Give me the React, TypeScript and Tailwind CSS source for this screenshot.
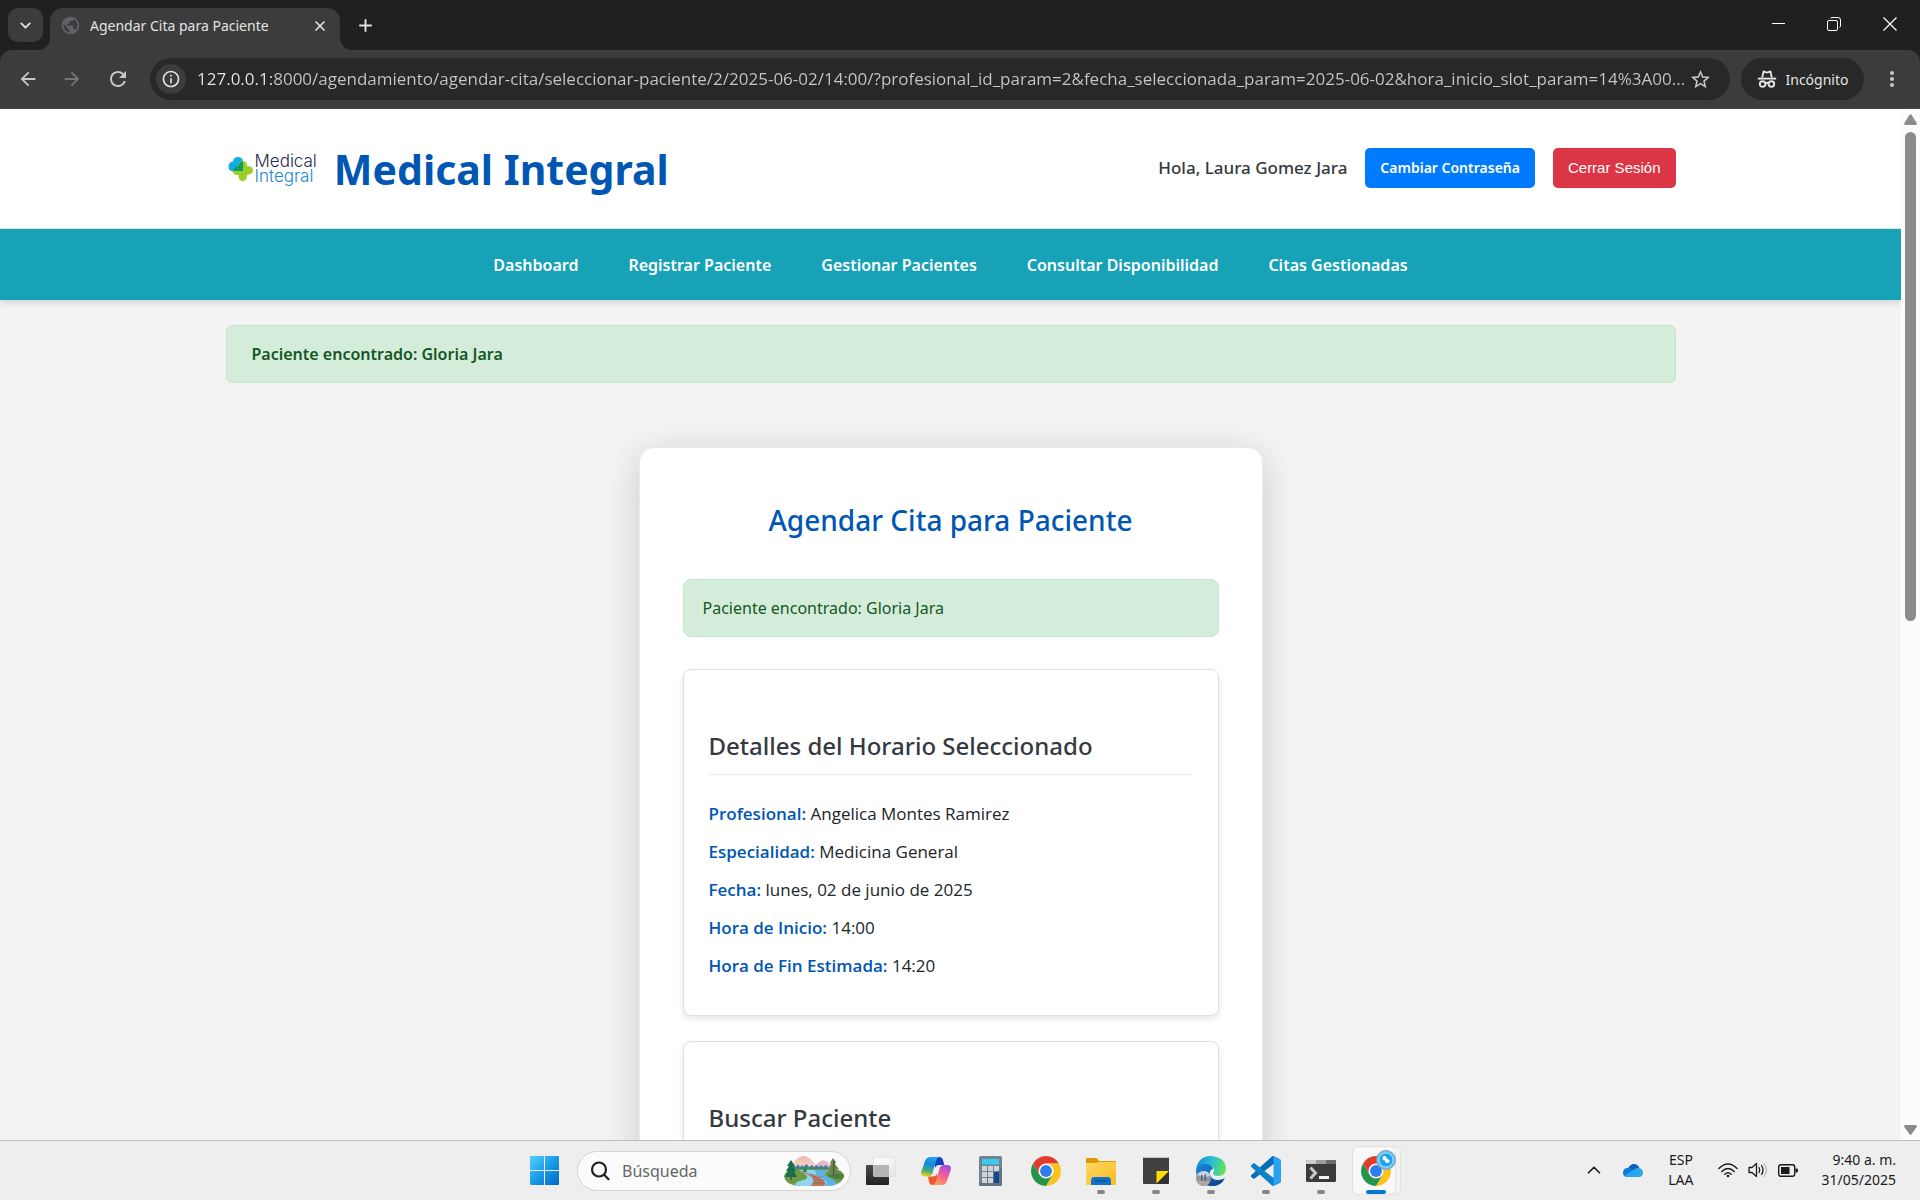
import React from "react";
import { ChevronDown, ChevronUp, Plus, X } from "lucide-react";
import { MdArrowBack, MdArrowForward, MdInfoOutline, MdMoreVert, MdPublic, MdRefresh, MdStarBorder } from "react-icons/md";

const URL_TEXT =
  "127.0.0.1:8000/agendamiento/agendar-cita/seleccionar-paciente/2/2025-06-02/14:00/?profesional_id_param=2&fecha_seleccionada_param=2025-06-02&hora_inicio_slot_param=14%3A00...";

const NAV = ["Dashboard", "Registrar Paciente", "Gestionar Pacientes", "Consultar Disponibilidad", "Citas Gestionadas"];

const DETAILS = [
  ["Profesional:", "Angelica Montes Ramirez"],
  ["Especialidad:", "Medicina General"],
  ["Fecha:", "lunes, 02 de junio de 2025"],
  ["Hora de Inicio:", "14:00"],
  ["Hora de Fin Estimada:", "14:20"],
];

/* ---------- Browser chrome ---------- */

function IncognitoIcon() {
  return (
    <svg viewBox="0 0 20 20" className="size-5" fill="none" stroke="#e3e3e3" strokeWidth="1.9">
      <path d="M5.2 8.6 6.6 2.4l2 .8c.9.3 1.9.3 2.8 0l2-.8 1.4 6.2" strokeLinejoin="round" />
      <path d="M.8 9.6h18.4" />
      <circle cx="5.6" cy="15" r="2.8" />
      <circle cx="14.4" cy="15" r="2.8" />
      <path d="M8.4 14.4c1-.7 2.200-.7 3.200 0" />
    </svg>
  );
}

function TabStrip() {
  return (
    <div className="flex h-[50px] items-center bg-[#1f2120] text-[#e3e3e3]">
      <button aria-label="Buscar pestañas" className="ml-2 flex h-[34px] w-[35px] items-center justify-center rounded-[10px] bg-[#3c3c3c]">
        <ChevronDown size={17} strokeWidth={2.6} />
      </button>
      <div className="relative ml-[7px] flex h-[42px] w-[290px] items-center self-end rounded-t-[13px] bg-[#3c3c3c] px-[10px] pb-[7px]">
        <svg viewBox="0 0 12 12" className="absolute bottom-0 -left-3 size-3" fill="#3c3c3c"><path d="M12 0v12H0A12 12 0 0 0 12 0z" /></svg>
        <svg viewBox="0 0 12 12" className="absolute -right-3 bottom-0 size-3" fill="#3c3c3c"><path d="M0 0v12h12A12 12 0 0 1 0 0z" /></svg>
        <MdPublic size={21} color="#5f6368" />
        <span className="ml-[9px] flex-1 truncate text-[14px] leading-5 text-[#e3e3e3]">Agendar Cita para Paciente</span>
        <button aria-label="Cerrar pestaña" className="flex size-5 items-center justify-center">
          <X size={16} strokeWidth={2.5} />
        </button>
      </div>
      <button aria-label="Nueva pestaña" className="ml-[15px] flex size-5 items-center justify-center">
        <Plus size={19} strokeWidth={2.4} />
      </button>
      <div className="ml-auto flex pr-[2px] pb-[2px]">
        <button aria-label="Minimizar" className="flex h-9 w-14 items-center justify-center">
          <svg width="13" height="13" viewBox="0 0 13 13" stroke="#fff"><path d="M0 5.500h13" /></svg>
        </button>
        <button aria-label="Restaurar" className="flex h-9 w-14 items-center justify-center">
          <svg width="14" height="14" viewBox="0 0 14 14" stroke="#fff" fill="none">
            <rect x=".5" y="3.500" width="10" height="10" rx="1.500" />
            <path d="M3.500 1.500Q4 .5 5 .5h6q2.500 0 2.500 2.500v6q0 1-1 1.500" />
          </svg>
        </button>
        <button aria-label="Cerrar" className="flex h-9 w-14 items-center justify-center">
          <svg width="14" height="14" viewBox="0 0 14 14" stroke="#fff" strokeWidth="1.200"><path d="M.5.5l13 13M13.500.5l-13 13" /></svg>
        </button>
      </div>
    </div>
  );
}

function Toolbar() {
  return (
    <div className="bg-[#1f2120]">
      <div className="flex h-[59px] items-center rounded-t-[12px] border-b border-[#4a4849] bg-[#3c3c3c] pr-[16px] pl-[17px] text-[#e3e3e3]">
        <button aria-label="Atrás"><MdArrowBack size={22} color="#c7c7c7" /></button>
        <button aria-label="Adelante" className="ml-[22px]"><MdArrowForward size={22} color="#757575" /></button>
        <button aria-label="Recargar" className="ml-[23px]"><MdRefresh size={24} color="#c7c7c7" /></button>
        <div className="ml-[20px] flex h-[42px] flex-1 items-center rounded-full bg-[#282828] pr-[18px] pl-[6px]">
          <button aria-label="Información del sitio" className="flex size-[30px] shrink-0 items-center justify-center rounded-full bg-[#3c3c3c]">
            <MdInfoOutline size={20} />
          </button>
          <input
            aria-label="Dirección"
            readOnly
            value={URL_TEXT}
            className="ml-[11px] min-w-0 flex-1 bg-[linear-gradient(to_right,#e8e8e8_77px,#c7c7c7_77px)] bg-clip-text font-['Open_Sans',sans-serif] text-[17px] leading-6 text-transparent outline-none"
          />
          <button aria-label="Añadir a marcadores" className="shrink-0"><MdStarBorder size={23} color="#c7c7c7" /></button>
        </div>
        <button className="ml-[11px] flex h-[42px] w-[123px] items-center justify-center gap-[9px] rounded-full bg-[#282828] text-[14px]">
          <IncognitoIcon />
          Incógnito
        </button>
        <button aria-label="Menú" className="ml-[16px]"><MdMoreVert size={24} color="#c7c7c7" /></button>
      </div>
    </div>
  );
}

/* ---------- Page ---------- */

function Logo() {
  return (
    <div className="flex items-center gap-px">
      <svg width="26" height="26" viewBox="0 0 26 26">
        <path d="M5 5.500Q5.500 1 10 1t5 4.500q0 9 0 10H5q-4.500-.5-4.500-5T5 5.500z" fill="#12aee0" />
        <path d="M10.500 10q0-5 4.200-5t4.300 5q5.500 0 6 4t-6 5q0 6-4.300 6t-4.200-6q-6 0-6-4.500h6z" fill="#9bcf26" />
        <path d="M10.500 15h-5.500q.5-4 5.500-5 .5-4.500 4.500-4.500V15z" fill="#169a63" />
      </svg>
      <span className="flex flex-col font-['Inter',sans-serif] text-[17px] leading-[15px] font-light">
        <span className="text-[#1f2b4d]">Medical</span>
        <span className="text-[#1e88d2]">Integral</span>
      </span>
    </div>
  );
}

function SiteHeader() {
  return (
    <header className="border-b border-[#e5e7ea] bg-white">
      <div className="mx-auto flex h-[119px] w-full max-w-[1450px] items-center pb-px">
        <div className="flex items-center gap-[17px] pt-[2px] pl-[2px]">
          <Logo />
          <h1 className="text-[41px] leading-[50px] font-bold text-[#0056b3]">Medical Integral</h1>
        </div>
        <div className="ml-auto flex items-center gap-[18px]">
          <span className="text-[17px] leading-6 font-medium text-[#343a40]">Hola, Laura Gomez Jara</span>
          <a href="#cambiar" className="flex h-10 items-center rounded-[5px] bg-[#007bff] px-[15px] pb-[2px] text-[14px] font-semibold text-white">
            Cambiar Contraseña
          </a>
          <button className="h-10 rounded-[5px] bg-[#dc3545] px-[15px] font-['Liberation_Sans',sans-serif] text-[15px] text-white">Cerrar Sesión</button>
        </div>
      </div>
    </header>
  );
}

function Card({ title, children }: { title: string; children?: React.ReactNode }) {
  return (
    <section className="rounded-[8px] border border-[#dee0e6] bg-white px-[25px] pt-[60px] pb-[30px] shadow-[0_3px_6px_rgba(0,0,0,0.1)]">
      <h3 className="border-b border-[#e9ecef] pb-3 text-[24px] leading-8 font-medium text-[#343a40]">{title}</h3>
      {children}
    </section>
  );
}

function Page() {
  return (
    <div className="min-w-0 flex-1 overflow-hidden bg-[#f3f3f3]">
      <SiteHeader />
      <nav className="flex h-[71px] items-center justify-center gap-[50px] bg-[#17a2b8] shadow-[0_3px_6px_rgba(0,0,0,0.12)]">
        {NAV.map((item) => (
          <a key={item} href="#nav" className="text-base font-semibold text-white">{item}</a>
        ))}
      </nav>
      <main className="mx-auto w-full max-w-[1450px] pt-[25px]">
        <div role="status" className="rounded-[6px] border border-[#c3e6cb] bg-[#d4edda] px-[25px] py-4 text-base leading-6 font-semibold text-[#155724]">
          Paciente encontrado: Gloria Jara
        </div>
        <div className="mx-auto mt-16 max-w-[624px] rounded-[15px] border border-[#e9ecef] bg-white px-[43px] pt-[54px] pb-11 shadow-[0_8px_35px_rgba(0,0,0,0.17)]">
          <h2 className="text-center text-[28px] leading-9 font-medium text-[#0056b3]">Agendar Cita para Paciente</h2>
          <div role="status" className="mt-[41px] rounded-[8px] border border-[#c3e6cb] bg-[#d4edda] px-[19px] py-4 text-base leading-6 text-[#155724]">
            Paciente encontrado: Gloria Jara
          </div>
          <div className="mt-8 flex flex-col gap-[25px]">
            <Card title="Detalles del Horario Seleccionado">
              <div className="mt-5 font-['Open_Sans',sans-serif] text-[17px] leading-[38px] text-[#212529]">
                {DETAILS.map(([label, value]) => (
                  <p key={label}>
                    <strong className="font-[650] text-[#0056b3]">{label}</strong> {value}
                  </p>
                ))}
              </div>
            </Card>
            <Card title="Buscar Paciente" />
          </div>
        </div>
      </main>
    </div>
  );
}

function Scrollbar() {
  return (
    <div className="flex w-[19px] shrink-0 flex-col items-center bg-[#fcfcfc] py-[5px]">
      <svg width="13" height="11" viewBox="0 0 13 11" fill="#8b8b8b"><path d="M5.500.8q1-1 2 0l5.200 8.200q.5 2-1 2H1.300q-1.500 0-1-2z" /></svg>
      <div className="mt-[7px] h-[489px] w-[11px] rounded-full bg-[#8b8b8b]" />
      <svg width="13" height="10" viewBox="0 0 13 10" fill="#8b8b8b" className="mt-auto"><path d="M5.500 9.200q1 1 2 0l5.200-7.200q.5-2-1-2H1.300q-1.500 0-1 2z" /></svg>
    </div>
  );
}

/* ---------- Taskbar ---------- */

function ChromeLogo() {
  return (
    <svg viewBox="0 0 48 48" className="size-[30px]">
      <circle cx="24" cy="24" r="12" fill="#fff" />
      <path d="M24 12h20.780a24 24 0 0 0-41.560 0L13.610 30A12 12 0 0 1 24 12z" fill="#e33b2e" />
      <path d="M34.390 30 24 48a24 24 0 0 0 20.780-36H24a12 12 0 0 1 10.390 18z" fill="#fcc31e" />
      <path d="M13.610 30 3.220 12A24 24 0 0 0 24 48l10.390-18a12 12 0 0 1-20.780 0z" fill="#23944a" />
      <circle cx="24" cy="24" r="9.500" fill="#2f7cee" />
    </svg>
  );
}

function WindowsLogo() {
  return (
    <svg viewBox="0 0 29 29" className="size-[29px]">
      <defs>
        <linearGradient id="win" x1="0" y1="0" x2="29" y2="29" gradientUnits="userSpaceOnUse">
          <stop stopColor="#56d2fd" /><stop offset=".5" stopColor="#1a9be8" /><stop offset="1" stopColor="#0069c8" />
        </linearGradient>
      </defs>
      <path d="M1 0h13v14H0V1q0-1 1-1zM15 0h13q1 0 1 1v13H15zM0 15h14v14H1q-1 0-1-1zM15 15h14v13q0 1-1 1H15z" fill="url(#win)" />
    </svg>
  );
}

function Landscape() {
  return (
    <svg viewBox="0 0 61 32" className="h-8 w-[61px]">
      <defs>
        <linearGradient id="mtn" x1="0" y1="0" x2="0" y2="1"><stop stopColor="#eeb4a8" /><stop offset="1" stopColor="#fbe3dc" /></linearGradient>
        <clipPath id="isle"><path d="M1 21Q4 13 15 13L46 13Q60 14 61 21 59 31 42 31H20Q2 31 1 21z" /></clipPath>
      </defs>
      <path d="M6 15Q14 1 20 1t13 9Q38 4 43 6t8 10z" fill="url(#mtn)" />
      <path d="M33 10Q38 4 43 6l6 8H36z" fill="#e3b7d3" />
      <path d="M9 16v-4l2-2 2 2 2-3 2 3 2-2 2 2 3-3 2 3 3-2 2 2 2-2 3 2 2-2 2 2 3-2 2 2v5z" fill="#417f95" />
      <g clipPath="url(#isle)">
        <path d="M0 14h61v18H0z" fill="#6d9a45" />
        <path d="M14 15h32l-4 3q-3 2 4 5t6 9H12q-2-5 8-7t-4-10z" fill="#8fd4f0" />
        <path d="M32 15h13q-8 4 2 8t6 9H42q4-6-3-9t-7-8z" fill="#5cb3e2" />
        <path d="M14 15q14 5 16 9t-4 8h15q4-6-6-10T14 15z" fill="#b77964" />
        <path d="M27 19l8 2M30 22h10M30 25h12M29 28h13" stroke="#8d5547" strokeWidth=".6" />
        <path d="M44 20q8-3 17-1v4q-10 3-17-3z" fill="#4d8040" />
      </g>
      <path d="M8 5 4 11h2l-3 5h2l-3 6h12l-3-6h2l-3-5h2z" fill="#176e4e" />
      <path d="M7.500 22h1.400v3H7.500z" fill="#6d432c" />
      <path d="M22 9l-2 8h4z" fill="#27865a" />
      <path d="M50 3l-3 5 1 1-4 6h3l-2 3h11l-2-4h2l-4-5 1-2z" fill="#69894f" />
      <path d="M50 6h1.200v15H50z" fill="#5c5137" />
    </svg>
  );
}

function TaskViewIcon() {
  return (
    <svg viewBox="0 0 30 28" className="h-7 w-[30px]">
      <defs>
        <linearGradient id="tvd" x1="0" y1="0" x2="0" y2="1"><stop stopColor="#4a4a48" /><stop offset="1" stopColor="#222" /></linearGradient>
        <linearGradient id="tvl" x1="0" y1="0" x2="1" y2="1"><stop stopColor="#fff" /><stop offset="1" stopColor="#e4e4e4" /></linearGradient>
      </defs>
      <rect y="8" width="23" height="20" rx="1" fill="url(#tvd)" />
      <rect x="7.500" y=".5" width="22" height="19" rx="1" fill="url(#tvl)" stroke="#dcdcdc" strokeWidth=".6" />
      <path d="M7.500 8H22q1 0 1 1v10.500H8.500q-1 0-1-1z" fill="#b5b5b3" />
    </svg>
  );
}

function CopilotIcon() {
  return (
    <svg viewBox="0 0 30 28" className="h-7 w-[30px]">
      <defs>
        <linearGradient id="cp1" x1="8" y1="0" x2="4" y2="19" gradientUnits="userSpaceOnUse">
          <stop stopColor="#1ea5ee" /><stop offset=".35" stopColor="#1686dd" /><stop offset=".7" stopColor="#3fae7c" /><stop offset="1" stopColor="#f2cd0f" />
        </linearGradient>
        <linearGradient id="cp2" x1="25" y1="8" x2="16" y2="28" gradientUnits="userSpaceOnUse">
          <stop stopColor="#a64be6" /><stop offset=".5" stopColor="#f2608f" /><stop offset="1" stopColor="#ffa154" />
        </linearGradient>
      </defs>
      <path d="M14 0h4.500q2.500 0 3.300 2.500L23.300 8H18q-3 0-4 3z" fill="#173fc4" />
      <path d="M16 28h-4.500q-2.500 0-3.300-2.500L7 19.500h5q3 0 4-3z" fill="#f0582e" />
      <path d="M9.500 0H18q-2 .8-2.800 3.500L11.500 16q-1.100 3.500-4.500 3.500H4q-5 0-3.700-5L4.200 3.500Q5.500 0 9.500 0z" fill="url(#cp1)" />
      <path d="M20.500 28H12q2-.8 2.800-3.500L18.500 11.500Q19.500 8 23 8h3q5 0 3.700 5l-3.900 11.500q-1.300 3.500-5.300 3.500z" fill="url(#cp2)" />
    </svg>
  );
}

function CalculatorIcon() {
  return (
    <svg viewBox="0 0 23 30" className="h-[30px] w-[23px]">
      <rect width="23" height="30" rx="1.500" fill="#76838e" />
      <path d="M0 27 23 12v16q0 2-2 2H2q-2 0-2-2z" fill="#66727d" />
      <rect x="3" y="3" width="17" height="5.500" rx=".5" fill="#35cdf3" />
      <path d="M3 10h5v5H3zM9 10h5v5H9zM15 10h5v5h-5zM3 16h5v5H3zM9 16h5v5H9zM3 22h5v5H3zM9 22h5v5H9z" fill="#ced7df" />
      <path d="M15 16h5v11h-5z" fill="#0b4a91" />
    </svg>
  );
}

function ExplorerIcon() {
  return (
    <svg viewBox="0 0 30 28" className="h-7 w-[30px]">
      <defs>
        <linearGradient id="fold" x1="0" y1="0" x2="1" y2="1"><stop stopColor="#ffd864" /><stop offset="1" stopColor="#fbbb20" /></linearGradient>
      </defs>
      <path d="M1 1h9q1 0 2 1.500L13 4h16q1 0 1 1v6H0V2q0-1 1-1z" fill="#dc9a06" />
      <path d="M0 6h10q1.500 0 2.500-1H30v22q0 1-1 1H1q-1 0-1-1z" fill="url(#fold)" />
      <path d="M5 28v-4q0-4 3-4h14q3 0 3 4v4z" fill="#0f71c8" />
      <path d="M8.500 24h13" stroke="#0a4e92" strokeWidth="1.200" />
    </svg>
  );
}

function StickyIcon() {
  return (
    <svg viewBox="0 0 26 27" className="h-[27px] w-[26px]">
      <path d="M1 0h24q1 0 1 1v14L14 27H1q-1 0-1-1V1q0-1 1-1z" fill="#414141" />
      <path d="M0 1q0-1 1-1h24q1 0 1 1z" fill="#c9c9c9" />
      <path d="M26 14v12q0 1-1 1H13z" fill="#303030" />
      <path d="M13.500 14H26L13.500 26.500z" fill="#ffdc00" />
    </svg>
  );
}

function EdgeIcon() {
  return (
    <svg viewBox="0 0 30 30" className="size-[30px]">
      <defs>
        <linearGradient id="eg" x1="2" y1="6" x2="29" y2="14" gradientUnits="userSpaceOnUse">
          <stop stopColor="#1391da" /><stop offset=".5" stopColor="#2fc0cf" /><stop offset="1" stopColor="#63e457" />
        </linearGradient>
        <linearGradient id="eb" x1="0" y1="10" x2="22" y2="30" gradientUnits="userSpaceOnUse">
          <stop stopColor="#1a86d9" /><stop offset="1" stopColor="#0c4fa0" />
        </linearGradient>
      </defs>
      <path d="M0 15Q1 7 8 7q8 0 9 6-4 1-3 6 2 5 8 5 4 0 7-2-4 8-13 8Q1 30 0 15z" fill="url(#eb)" />
      <path d="M12 15q-2 7 4 10 6 2 12-2-3 7-12 7Q6 28 8 19z" fill="#124a94" />
      <path d="M0 14Q2 0 15 0q14 1 15 12 0 8-8 8-5 0-5-3 1-1 1-3-1-5-8-6Q3 7 0 14z" fill="url(#eg)" />
      <circle cx="7.500" cy="22.500" r="7.500" fill="#8e9aa8" />
      <path d="M1 19q3-4 7-4 5 0 6.500 5L9 21z" fill="#c6d1da" />
      <path d="M1 26q6-3 13 0-3 4-6.500 4T1 26z" fill="#b4a79d" />
      <path d="M5 19h1.500v6H5zM8.500 18.500H10V25H8.500z" fill="#4e637b" />
    </svg>
  );
}

function VsCodeIcon() {
  return (
    <svg viewBox="0 0 100 100" className="size-[30px]">
      <path d="M96.500 10.800 75.900.9c-2.400-1.200-5.300-.7-7.100 1.200L1.300 63.600c-1.800 1.700-1.800 4.500 0 6.100l5.500 5c1.500 1.300 3.700 1.400 5.300.2L93.300 13.300c2.700-2.100 6.600-.1 6.600 3.300 0-2.600-1.300-4.800-3.400-5.800z" fill="#0a6cb5" />
      <path d="M96.500 89.200 75.900 99.100c-2.400 1.200-5.200.7-7.100-1.200L1.300 36.400c-1.800-1.700-1.800-4.500 0-6.100l5.500-5c1.500-1.300 3.700-1.400 5.300-.2l81.200 61.600c2.700 2.100 6.600.1 6.600-3.300 0 2.600-1.300 4.800-3.400 5.800z" fill="#0f80cc" />
      <path d="M75.900 99.100c-2.400 1.200-5.200.7-7.100-1.200 2.300 2.300 6.200.7 6.200-2.600V4.700c0-3.300-3.900-4.900-6.200-2.600 1.900-1.900 4.800-2.400 7.100-1.200l20.600 9.900c2.200 1 3.500 3.200 3.500 5.600v67.200c0 2.400-1.400 4.600-3.500 5.600z" fill="#2aa2f2" />
    </svg>
  );
}

function TerminalIcon() {
  return (
    <svg viewBox="0 0 30 22" className="h-[22px] w-[30px]">
      <rect width="30" height="22" rx="1.500" fill="#3b3b3b" />
      <path d="M0 4V1.500Q0 0 1.500 0H10v4z" fill="#cdcdcd" />
      <path d="M10 0h10v4H10z" fill="#9d9d9d" />
      <path d="M20 0h8.500Q30 0 30 1.500V4H20z" fill="#6d6d6d" />
      <path d="m4.500 7.500 5 5.500-5 5.500" fill="none" stroke="#c8c8c8" strokeWidth="3" />
      <path d="M13 16h10v3H13z" fill="#f4f4f4" />
    </svg>
  );
}

function ActiveChrome() {
  return (
    <span className="relative flex">
      <ChromeLogo />
      <svg viewBox="0 0 20 20" className="absolute -top-[6px] left-[15px] size-5">
        <circle cx="10" cy="10" r="9.500" fill="#6fc3ea" stroke="#7b9fb3" />
        <circle cx="10" cy="10" r="7" fill="#1aa5f0" stroke="#a9dff7" />
        <path d="M6.500 7.500q.5-2 2.500-1.500t2 3q3 .5 2.500 2.500t-2.500 1.500-2-2.500q-3-.5-2.500-3z" fill="#fff" />
      </svg>
    </span>
  );
}

const APPS: { name: string; icon: React.ReactNode; state?: "open" }[] = [
  { name: "Vista de tareas", icon: <TaskViewIcon /> },
  { name: "Copilot", icon: <CopilotIcon /> },
  { name: "Calculadora", icon: <CalculatorIcon /> },
  { name: "Google Chrome", icon: <ChromeLogo /> },
  { name: "Explorador de archivos", icon: <ExplorerIcon />, state: "open" },
  { name: "Notas rápidas", icon: <StickyIcon />, state: "open" },
  { name: "Microsoft Edge", icon: <EdgeIcon />, state: "open" },
  { name: "Visual Studio Code", icon: <VsCodeIcon />, state: "open" },
  { name: "Terminal", icon: <TerminalIcon />, state: "open" },
];

function Tray() {
  return (
    <div className="flex items-center justify-end pr-[24px] pb-px text-[14px] leading-5 text-[#1b1b1b]">
      <button aria-label="Mostrar iconos ocultos"><ChevronUp size={22} strokeWidth={1.8} /></button>
      <svg viewBox="0 0 20 13" className="ml-[18px] h-[13px] w-5">
        <path d="M5 4.500Q7 0 11 0q4 .2 5.500 4.200L10 8z" fill="#0b62ba" />
        <path d="M0 9q0-5 5-5.200 2 0 4 1.500l6 4L3 12.700Q0 12 0 9z" fill="#0f7bd8" />
        <path d="M9 6.800q3-3.200 7.300-2.600Q20 5 20 9q-.5 4-4 4H4q-1.500 0-2.500-1z" fill="#29a7ec" />
      </svg>
      <div className="ml-[25px] text-center">
        <div>ESP</div>
        <div>LAA</div>
      </div>
      <button aria-label="Red, volumen y batería" className="ml-[24px] flex items-center gap-[10px]">
        <svg viewBox="0 0 20 15" className="h-[15px] w-5" fill="none" stroke="#1b1b1b" strokeWidth="1.400" strokeLinecap="round">
          <path d="M.8 5.500q9.200-9 18.400 0M3.800 8.500q6.200-6 12.400 0M6.800 11.200q3.200-3 6.400 0" />
          <circle cx="10" cy="13" r="1.300" fill="#1b1b1b" stroke="none" />
        </svg>
        <svg viewBox="0 0 20 16" className="h-4 w-5" fill="none" stroke="#1b1b1b" strokeWidth="1.300" strokeLinecap="round" strokeLinejoin="round">
          <path d="M1 5.500h3L8.500 1.500v13L4 10.500H1zM11 5.500q1.500 2.500 0 5M13.500 3.500q3 4.500 0 9" />
          <path d="M16 1.500q5 6.500 0 13" stroke="#bdbdbd" />
        </svg>
        <svg viewBox="0 0 20 13" className="h-[13px] w-5">
          <rect x=".7" y=".7" width="16" height="11.600" rx="2.200" fill="none" stroke="#1b1b1b" strokeWidth="1.400" />
          <rect x="3" y="3" width="8.500" height="7" fill="#1b1b1b" />
          <path d="M17.500 4.500h1.500q1 0 1 2t-1 2h-1.500z" fill="#1b1b1b" />
        </svg>
      </button>
      <div className="ml-[24px] text-right">
        <div>9:40 a. m.</div>
        <div>31/05/2025</div>
      </div>
    </div>
  );
}

function Taskbar() {
  return (
    <footer className="grid h-[60px] shrink-0 grid-cols-[1fr_auto_1fr] border-t border-[#bcbcbc] bg-[#eeeeee]">
      <div />
      <div className="flex items-center">
        <button aria-label="Inicio" className="flex w-[55px] justify-center"><WindowsLogo /></button>
        <label className="ml-[5px] flex h-10 w-[274px] items-center rounded-full border border-[#d4d4d4] bg-[#fbfbfb] pr-[6px] pl-[12px]">
          <svg viewBox="0 0 20 20" className="size-5 shrink-0" fill="none" stroke="#1f1f1f" strokeWidth="2.200" strokeLinecap="round">
            <circle cx="9" cy="8.500" r="7" /><path d="m14.200 13.800 4.300 4.400" />
          </svg>
          <input aria-label="Búsqueda" placeholder="Búsqueda" className="ml-3 min-w-0 flex-1 bg-transparent text-base outline-none placeholder:text-[#666]" />
          <Landscape />
        </label>
        <div className="ml-[2px] flex h-[59px]">
          {APPS.map((app) => (
            <button key={app.name} aria-label={app.name} className="relative flex w-[55px] items-center justify-center">
              {app.icon}
              {app.state && <span className="absolute bottom-[6px] left-6 h-1 w-2 rounded-full bg-[#868686]" />}
            </button>
          ))}
          <button aria-label="Google Chrome, incógnito" className="relative flex w-[55px] items-center justify-center">
            <span className="absolute top-[5px] left-[9px] h-[49px] w-[44px] rounded-[6px] border border-[#e2e2e2] bg-[#f2f2f2]" />
            <span className="absolute top-[5px] left-[4px] h-[49px] w-[44px] rounded-[6px] border border-[#e2e2e2] bg-[#f8f8f8]" />
            <span className="relative"><ActiveChrome /></span>
            <span className="absolute bottom-[6px] left-[18px] h-1 w-5 rounded-full bg-[#0078d4]" />
          </button>
        </div>
      </div>
      <Tray />
    </footer>
  );
}

export default function App() {
  return (
    <div className="flex h-screen flex-col overflow-hidden font-['Noto_Sans',sans-serif]">
      <TabStrip />
      <Toolbar />
      <div className="flex min-h-0 flex-1">
        <Page />
        <Scrollbar />
      </div>
      <Taskbar />
    </div>
  );
}
